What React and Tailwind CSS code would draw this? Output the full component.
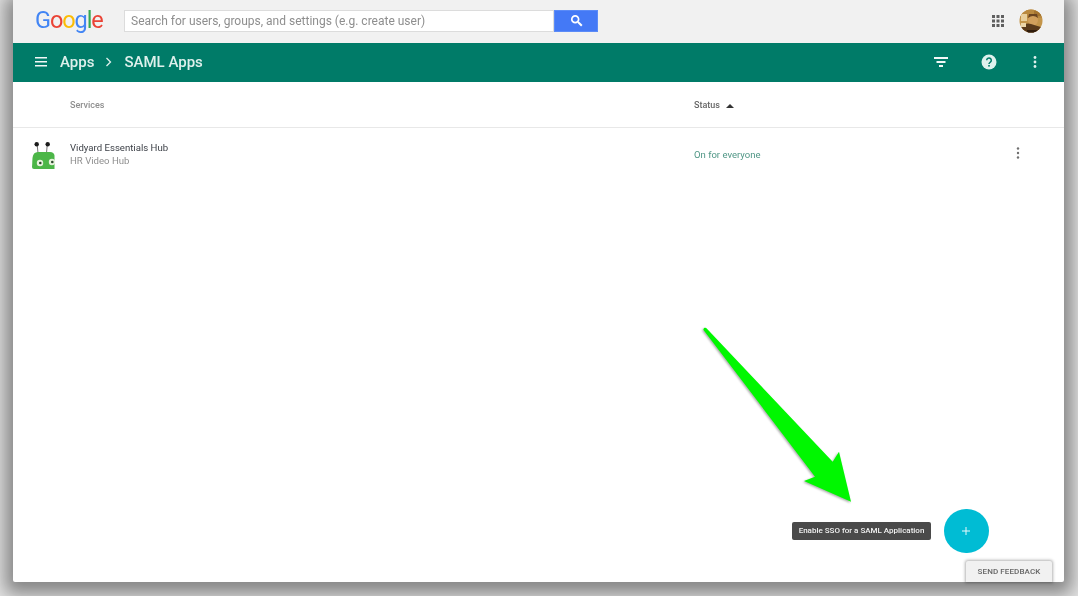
import React from "react";

const font = { fontFamily: '"Roboto", "Liberation Sans", sans-serif' };

function Logo() {
  return (
    <span className="w-[71px] text-[23.500px] leading-[28px] tracking-[-1.100px] mt-[-4px] whitespace-nowrap">
      <span className="text-[#4285f4]">G</span>
      <span className="text-[#ea4335]">o</span>
      <span className="text-[#fbbc05]">o</span>
      <span className="text-[#4285f4]">g</span>
      <span className="text-[#34a853]">l</span>
      <span className="text-[#ea4335]">e</span>
    </span>
  );
}

function Avatar() {
  return (
    <svg width="24" height="24" viewBox="0 0 24 24" className="shrink-0">
      <defs>
        <clipPath id="av"><circle cx="12" cy="12" r="11.500" /></clipPath>
      </defs>
      <g clipPath="url(#av)">
        <rect width="24" height="24" fill="#c4954a" />
        <rect x="0" y="0" width="24" height="9" fill="#b9893f" />
        <rect x="2" y="5" width="6" height="7" fill="#e8cf9c" />
        <rect x="15" y="2" width="7" height="5" fill="#a5742f" />
        <ellipse cx="14" cy="11" rx="5" ry="5.500" fill="#d2a05c" />
        <path d="M9 9q5-4 10 0l-1-4h-8z" fill="#6b4520" />
        <path d="M2 19q4-6 10-4t10 3v6H2z" fill="#5a3a1a" />
        <rect x="2" y="14" width="5" height="4" fill="#ecd6a8" />
        <rect x="8" y="21" width="10" height="3" fill="#2f1c0c" />
      </g>
    </svg>
  );
}

function Vidyard() {
  return (
    <svg width="24" height="28" viewBox="0 0 24 28" className="shrink-0">
      <path d="M6.200 4L7 12M16.200 4L15.500 12" stroke="#666" strokeWidth="0.900" />
      <circle cx="5.700" cy="3.200" r="2.200" fill="#1b1b1b" />
      <circle cx="16.700" cy="3.200" r="2.200" fill="#1b1b1b" />
      <path d="M7 11h12q4 0 4.500 3.500V28H3q-2 0-2-2l.5-9q.5-6 5.500-6z" fill="#4cb648" />
      <circle cx="9" cy="22" r="3.200" fill="#e6f2dc" />
      <circle cx="9.300" cy="22" r="1.300" fill="#2c4a2c" />
      <circle cx="21" cy="21" r="3.200" fill="#e6f2dc" />
      <circle cx="21.300" cy="21" r="1.300" fill="#2c4a2c" />
    </svg>
  );
}

function Arrow() {
  return (
    <svg
      width="165"
      height="190"
      viewBox="0 0 165 190"
      className="absolute left-[695px] top-[320px] drop-shadow-[-1px_1px_1px_rgba(0,0,0,0.35)]"
    >
      <path
        d="M8.500 10 C8 7.500 11 7 11.700 8.500 L137.700 141.700 L144 131.700 L156 181.700 L109 161 L120 156.700 Z"
        fill="#00f700"
      />
    </svg>
  );
}

export default function App() {
  return (
    <div style={font} className="relative w-[1078px] h-[596px] overflow-hidden bg-[#e4e4e4] blur-[0.35px]">
      <div className="relative ml-[13px] w-[1051px] h-[582px] bg-white rounded-b-[2px] shadow-[0_4px_18px_8px_rgba(0,0,0,0.42)] flex flex-col">
        <header className="h-[43px] shrink-0 bg-[#f1f1f1] flex items-center pl-[22px] pr-[21px]">
          <Logo />
          <div className="ml-[18px] flex h-[22px] w-[474px] mt-[-2px]">
            <div className="w-[430px] bg-white border border-[#dcdcdc] flex items-center pl-[6px] text-[12px] text-[#8e8e8e] whitespace-nowrap">
              Search for users, groups, and settings (e.g. create user)
            </div>
            <div className="w-[44px] bg-[#4479f6] border border-[#5b8bf7] flex items-center justify-center">
              <svg width="13" height="13" viewBox="0 0 13 13" fill="none" stroke="white">
                <circle cx="5.200" cy="5.200" r="3.400" strokeWidth="1.700" />
                <path d="M8 8l3.800 3.800" strokeWidth="2" />
              </svg>
            </div>
          </div>
          <div className="ml-auto flex items-center gap-[15px] mt-[-2px]">
            <svg width="12" height="12" viewBox="0 0 12 12" fill="#5f5f5f">
              <rect x="0" y="0" width="3" height="3" /><rect x="4.500" y="0" width="3" height="3" /><rect x="9" y="0" width="3" height="3" />
              <rect x="0" y="4.500" width="3" height="3" /><rect x="4.500" y="4.500" width="3" height="3" /><rect x="9" y="4.500" width="3" height="3" />
              <rect x="0" y="9" width="3" height="3" /><rect x="4.500" y="9" width="3" height="3" /><rect x="9" y="9" width="3" height="3" />
            </svg>
            <Avatar />
          </div>
        </header>

        <nav className="h-[39px] shrink-0 bg-[#007b68] flex items-center pl-[22px] pr-[27px] pb-[1px] text-[#def0ec] text-[15px] font-medium">
          <svg width="12" height="10" viewBox="0 0 12 10" fill="#f2f8f7" className="shrink-0">
            <rect y="0" width="12" height="1.500" /><rect y="4" width="12" height="1.500" /><rect y="8" width="12" height="1.500" />
          </svg>
          <span className="ml-[13px]">Apps</span>
          <svg width="8" height="10" viewBox="0 0 8 10" fill="none" stroke="#def0ec" strokeWidth="1.300" className="ml-[11px]">
            <path d="M1.500 1l4 4-4 4" />
          </svg>
          <span className="ml-[11px]">SAML Apps</span>
          <div className="ml-auto flex items-center">
            <svg width="14" height="10" viewBox="0 0 14 10" fill="#f2f8f7">
              <rect width="14" height="2" /><rect x="2.500" y="4" width="9" height="2" /><rect x="5" y="8" width="4" height="2" />
            </svg>
            <svg width="16" height="16" viewBox="0 0 16 16" className="ml-[33px]">
              <circle cx="8" cy="8" r="7.500" fill="#dff1ed" />
              <path d="M5.700 6.300a2.300 2.300 0 1 1 3.700 1.800c-.9.700-1.400 1-1.400 2" fill="none" stroke="#007b68" strokeWidth="1.500" />
              <rect x="7.200" y="11" width="1.600" height="1.600" fill="#007b68" />
            </svg>
            <svg width="4" height="12" viewBox="0 0 4 12" fill="#dff1ed" className="ml-[36px]">
              <circle cx="2" cy="1.500" r="1.400" /><circle cx="2" cy="6" r="1.400" /><circle cx="2" cy="10.500" r="1.400" />
            </svg>
          </div>
        </nav>

        <div className="h-[46px] shrink-0 border-b border-[#e8e8e8] flex items-center pt-[2px] text-[9px] font-medium">
          <span className="ml-[57px] w-[624px] text-[#8f8f8f]">Services</span>
          <span className="text-[#666]">Status</span>
          <svg width="8" height="4" viewBox="0 0 8 4" fill="#333" className="ml-[6px]"><path d="M4 0l4 4H0z" /></svg>
        </div>

        <div className="h-[53px] shrink-0 flex items-center pl-[18px]">
          <Vidyard />
          <div className="ml-[15px] w-[624px] flex flex-col mt-[-1px] text-[9.600px] leading-[13px]">
            <span className="text-[#3b3f46]">Vidyard Essentials Hub</span>
            <span className="text-[#8f8f8f]">HR Video Hub</span>
          </div>
          <span className="text-[9.500px] text-[#4f9685] mt-[1px]">On for everyone</span>
          <svg width="4" height="12" viewBox="0 0 4 12" fill="#6f6f6f" className="ml-[256px] mt-[-3px]">
            <circle cx="2" cy="1.500" r="1.200" /><circle cx="2" cy="6" r="1.200" /><circle cx="2" cy="10.500" r="1.200" />
          </svg>
        </div>
      </div>

      <Arrow />

      <div className="absolute left-[792px] top-[522px] w-[139px] h-[18px] bg-[#4a4a4a] rounded-[2px] flex items-center justify-center text-[8px] font-medium text-[#f2f2f2] whitespace-nowrap">
        Enable SSO for a SAML Application
      </div>
      <div className="absolute left-[944px] top-[509px] w-[45px] h-[44px] rounded-full bg-[#00bcd4] flex items-center justify-center pr-[1px]">
        <svg width="8" height="8" viewBox="0 0 8 8" stroke="#e8f8fa" strokeWidth="1"><path d="M4 0v8M0 4h8" /></svg>
      </div>
      <div className="absolute left-[966px] top-[561px] w-[86px] h-[21px] bg-[#f1f1f1] rounded-t-[2px] shadow-[0_0_3px_1px_rgba(0,0,0,0.3)] flex items-center justify-center text-[8px] font-medium text-[#666] tracking-[0.1px]">
        SEND FEEDBACK
      </div>
    </div>
  );
}
